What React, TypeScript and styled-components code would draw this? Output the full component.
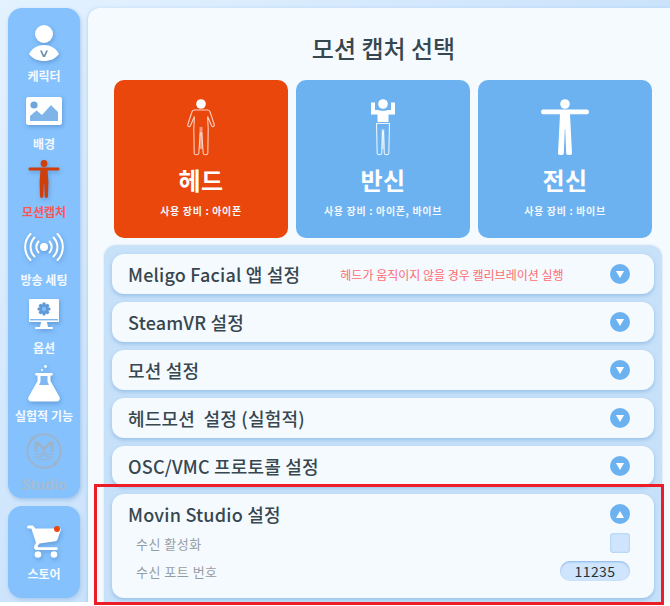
import React from "react";
import styled, { createGlobalStyle } from "styled-components";

const KR = `"Noto Sans CJK KR", "Noto Sans", sans-serif`;

const Global = createGlobalStyle`
  html, body { margin: 0; padding: 0; background: #fff; }
  body { font-family: ${KR}; overflow: hidden; }
`;

const Screen = styled.div`
  position: relative;
  width: 670px;
  height: 606px;
  overflow: hidden;
`;

const Page = styled.div`
  width: 670px;
  height: 602px;
  overflow: hidden;
  display: flex;
  gap: 8px;
  padding: 8px 0 0 8px;
  box-sizing: border-box;
  background: linear-gradient(135deg, #e4f2ff 0%, #c9e2fb 55%, #bcd9f6 100%);
`;

const Rail = styled.div`
  width: 72px;
  flex: none;
  display: flex;
  flex-direction: column;
  gap: 8px;
`;

const Group = styled.nav`
  height: 490px;
  padding-top: 10px;
  box-sizing: border-box;
  background: #84c1fd;
  border-radius: 14px;
  box-shadow: 1px 2px 4px rgba(70, 130, 200, 0.35);
`;

const StoreBox = styled.div`
  height: 92px;
  padding-top: 10px;
  box-sizing: border-box;
  background: #84c1fd;
  border-radius: 14px;
  box-shadow: 1px 2px 4px rgba(70, 130, 200, 0.25);
`;

const NavItem = styled.div`
  height: 68px;
  display: flex;
  flex-direction: column;
  align-items: center;
`;

const IconSlot = styled.div<{ $dim?: boolean }>`
  height: 50px;
  width: 100%;
  flex: none;
  display: flex;
  align-items: center;
  justify-content: center;
  svg { filter: ${(p) => (p.$dim ? "none" : "drop-shadow(1px 2px 2px rgba(40, 90, 150, 0.35))")}; overflow: visible; }
`;

const NavLabel = styled.div<{ $tone?: "white" | "red" | "dim" }>`
  height: 16px;
  line-height: 16px;
  font-size: ${(p) => (p.$tone === "dim" ? "14px" : "12px")};
  font-weight: 700;
  white-space: nowrap;
  color: ${(p) => (p.$tone === "red" ? "#ff5555" : p.$tone === "dim" ? "#a5bbd2" : "#f4faff")};
`;

const Main = styled.main`
  flex: 1;
  min-width: 0;
  height: 610px;
  background: #f5faff;
  border-radius: 12px 0 0 0;
  padding: 0 8px 0 16px;
  box-sizing: border-box;
  box-shadow: -1px 0 3px rgba(90, 150, 215, 0.25);
`;

const Title = styled.h1`
  margin: 0 -17px 0 -16px;
  height: 72px;
  line-height: 80px;
  text-align: center;
  font-size: 24px;
  font-weight: 500;
  color: #37474f;
`;

const Cards = styled.div`
  display: flex;
  gap: 8px;
  margin-left: 10px;
`;

const Card = styled.div<{ $active?: boolean }>`
  width: 174px;
  height: 158px;
  border-radius: 10px;
  background: ${(p) => (p.$active ? "#ea470d" : "#6cb2f0")};
  display: flex;
  flex-direction: column;
  align-items: center;
  color: #fff;
`;

const CardFigure = styled.div`
  height: 62px;
  margin-top: 19px;
  display: flex;
  align-items: flex-start;
  justify-content: center;
`;

const CardTitle = styled.div`
  font-size: 24px;
  font-weight: 700;
  line-height: 32px;
  margin-top: 3px;
  letter-spacing: 0.5px;
`;

const CardSub = styled.div`
  font-size: 10px;
  font-weight: 700;
  line-height: 14px;
  margin-top: 8px;
  letter-spacing: 0.65px;
  color: #f3f8ff;
`;

const Panel = styled.section`
  margin-top: 8px;
  height: 360px;
  padding: 8px 8px 0;
  box-sizing: border-box;
  background: #c7e1f9;
  border-radius: 12px 12px 0 0;
  display: flex;
  flex-direction: column;
  gap: 8px;
  box-shadow: 0 -1px 2px rgba(110, 160, 215, 0.35);
`;

const Row = styled.div<{ $open?: boolean }>`
  height: ${(p) => (p.$open ? "104px" : "40px")};
  flex: none;
  box-sizing: border-box;
  background: #f5faff;
  border-radius: 12px;
  padding: 0 24px 0 16px;
  box-shadow: 0 2px 4px rgba(80, 140, 210, 0.4);
`;

const RowHead = styled.div`
  height: 40px;
  display: flex;
  align-items: center;
`;

const RowTitle = styled.div`
  font-size: 18px;
  font-weight: 500;
  color: #37474f;
  white-space: pre;
  letter-spacing: 0.2px;
`;

const Hint = styled.div`
  font-size: 12px;
  color: #ff6a72;
  white-space: nowrap;
  margin-left: 40px;
`;

const Toggle = styled.div`
  margin-left: auto;
  width: 20px;
  height: 20px;
  border-radius: 50%;
  background: #6cb2f0;
  display: flex;
  align-items: center;
  justify-content: center;
`;

const Setting = styled.div`
  display: flex;
  align-items: center;
  height: 28px;
  padding-left: 8px;
  margin-top: -5px;
  & + & { margin-top: 0; }
`;

const SettingLabel = styled.div`
  font-size: 13px;
  color: #959da4;
  letter-spacing: 0.5px;
`;

const Check = styled.div`
  margin-left: auto;
  width: 20px;
  height: 20px;
  border-radius: 4px;
  background: #cfe5fd;
  box-shadow: inset 0 0 2px rgba(90, 150, 220, 0.6);
`;

const PortInput = styled.div`
  margin-left: auto;
  width: 70px;
  height: 20px;
  line-height: 20px;
  text-align: center;
  border-radius: 10px;
  background: #cfe5fd;
  box-shadow: inset 0 1px 2px rgba(90, 150, 220, 0.6);
  font-size: 14px;
  color: #263238;
  letter-spacing: 0.4px;
`;

const Marker = styled.div`
  position: absolute;
  left: 94px;
  top: 484px;
  width: 570px;
  height: 121px;
  box-sizing: border-box;
  border: 3.5px solid #ee1c25;
  pointer-events: none;
`;

const Tip = styled.span`
  position: absolute;
  right: 1px;
  top: 1px;
  width: 6px;
  height: 6px;
  border-radius: 50%;
  background: #ea470d;
`;

const CartWrap = styled.div`
  position: relative;
  display: flex;
`;

const PersonIcon = () => (
  <svg width="32" height="36" viewBox="0 0 32 36" fill="#fff">
    <circle cx="16" cy="9" r="9" />
    <path d="M1 29C4 23 10 20 16 20S28 23 31 29C27 34 22 36 16 36S5 34 1 29Z" />
    <path d="M12 25.5h1.8l2.2 4.8 2.2-4.8H20l-3 6.5h-2z" fill="#6f8da8" />
  </svg>
);

const ImageIcon = () => (
  <svg width="36" height="28" viewBox="0 0 36 28">
    <rect width="36" height="28" rx="2.5" fill="#fff" />
    <circle cx="8" cy="8" r="3.6" fill="#6ea6dc" />
    <path d="M4 23V19L10.5 13.5L16 18L25 8L32 15V24H4Z" fill="#7fb4e8" />
  </svg>
);

const TPoseIcon = () => (
  <svg width="32" height="38" viewBox="0 0 32 38" fill="#cf3f0c">
    <circle cx="16" cy="3.5" r="3.4" />
    <path d="M1.5 7.5H30.5C31.8 7.5 31.8 10.4 30.5 10.4H19.6L20.4 22L20 36.5C19.8 38.4 16.9 38.4 16.7 36.5L16.2 24H15.8L15.3 36.5C15.1 38.4 12.2 38.4 12 36.5L11.6 22L12.4 10.4H1.5C.2 10.4 .2 7.5 1.5 7.5Z" />
  </svg>
);

const BroadcastIcon = () => (
  <svg width="36" height="28" viewBox="0 0 36 28" fill="none" stroke="#fff" strokeWidth="2" strokeLinecap="round">
    <circle cx="18" cy="14" r="4" fill="#fff" stroke="none" />
    <path d="M12.5 8.5a8 8 0 0 0 0 11M23.5 8.5a8 8 0 0 1 0 11" />
    <path d="M8.5 4.5a13.5 13.5 0 0 0 0 19M27.5 4.5a13.5 13.5 0 0 1 0 19" />
    <path d="M4.5 1a18.5 18.5 0 0 0 0 26M31.5 1a18.5 18.5 0 0 1 0 26" />
  </svg>
);

const gearTeeth = [0, 45, 90, 135];
const MonitorIcon = () => (
  <svg width="30" height="32" viewBox="0 0 30 32">
    <rect width="30" height="23" rx="1" fill="#fff" />
    <rect x="1" y="20" width="28" height="1.4" fill="#7eb6ee" />
    <path d="M12 23H18L19 28H11Z" fill="#fff" />
    <rect x="6" y="28" width="18" height="2" rx="1" fill="#fff" />
    <g fill="#5f9ad6">
      {gearTeeth.map((a) => (
        <rect key={a} x="13.4" y="3.6" width="3.2" height="12.8" rx="0.8" transform={`rotate(${a} 15 10)`} />
      ))}
      <circle cx="15" cy="10" r="4.8" />
    </g>
    <circle cx="15" cy="10" r="2.2" fill="#84bdf3" />
  </svg>
);

const FlaskIcon = () => (
  <svg width="32" height="37" viewBox="0 0 32 37">
    <circle cx="17.5" cy="1.5" r="1.4" fill="#fff" />
    <circle cx="14" cy="5" r="1" fill="#fff" />
    <path d="M8 8H24C25 8 25 10.5 24 10.5H22.5V16L31.5 32C32.5 34.5 31 36.5 29 36.5H3C1 36.5-.5 34.5.5 32L9.5 16V10.5H8C7 10.5 7 8 8 8Z" fill="#fff" />
    <path d="M12.5 11H19.5V16.5L21 20H11L12.5 16.5Z" fill="#7fb8f2" />
  </svg>
);

const StudioIcon = () => (
  <svg width="36" height="36" viewBox="0 0 36 36" fill="none" stroke="#a0b2c6">
    <circle cx="18" cy="18" r="16.8" strokeWidth="1.8" />
    <path d="M10 19V9.5H11.5L18 16L24.5 9.5H26V19" strokeWidth="2.6" strokeLinejoin="round" />
    <path d="M9 21.5H14L18 18M27 21.5H22L18 18" strokeWidth="1.1" />
    <path d="M9 24H14.5L18 21L21.5 24H27" strokeWidth="1.1" />
    <path d="M11 26.5H25" strokeWidth="1" />
    <circle cx="6.5" cy="5.5" r="2" fill="#a0b2c6" stroke="none" />
    <circle cx="29.5" cy="30.5" r="2" fill="#a0b2c6" stroke="none" />
  </svg>
);

const CartIcon = () => (
  <svg width="34" height="33" viewBox="0 0 34 33" fill="#fff">
    <path d="M1.5 0.5H5C6 0.5 6.8 1 7.2 2L8.3 3.5H33C33.8 3.5 34 4.3 33.8 5L30.5 14.5C30.2 15.3 29.5 16 28.5 16.2L12.5 18.6L10.8 20.8C10.4 21.6 10.9 22.2 11.6 22.2H30.5V25H10C7.5 25 6.2 22.5 7.6 20.2L9 17.8L4.3 3.5H1.5C-.4 3.5-.4 .5 1.5 .5Z" />
    <circle cx="11" cy="29.5" r="3.3" />
    <circle cx="27" cy="29.5" r="3.3" />
  </svg>
);

const HeadFigure = () => (
  <svg width="30" height="57" viewBox="0 0 30 57" fill="none" stroke="#fff" strokeOpacity="0.75" strokeWidth="1.1">
    <circle cx="15" cy="5" r="4.8" fill="#fff" stroke="none" />
    <path d="M8.5 11H21.5C22.8 11 23.6 11.8 24 12.8L28.2 25.5C28.8 27.6 26.6 28.4 25.6 26.7L21.6 17.5L22.2 30L21.8 54.5C21.6 56.2 17.5 56.2 17.2 54.5L15.8 34H14.2L12.8 54.5C12.5 56.2 8.4 56.2 8.2 54.5L7.8 30L8.4 17.5L4.4 26.7C3.4 28.4 1.2 27.6 1.8 25.5L6 12.8C6.4 11.8 7.2 11 8.5 11Z" />
    <path d="M15 28V50" strokeWidth="3" strokeOpacity="0.45" />
  </svg>
);

const HalfFigure = () => (
  <svg width="26" height="57" viewBox="0 0 26 57" fill="none">
    <circle cx="13" cy="5" r="4.8" fill="#fff" />
    <path d="M1 3.5H5V11H8C9 12 17 12 18 11H21V3.5H25V15.5H18.5V23H7.5V15.5H1Z" fill="#fff" />
    <path d="M6.5 24.5L7.2 54.5C7.4 56 11.5 56 11.7 54.5L12.6 32H13.4L14.3 54.5C14.5 56 18.6 56 18.8 54.5L19.5 24.5Z" stroke="#fff" strokeOpacity="0.85" strokeWidth="1.1" />
    <path d="M13 30V50" stroke="#fff" strokeOpacity="0.4" strokeWidth="3" />
  </svg>
);

const FullFigure = () => (
  <svg width="48" height="57" viewBox="0 0 48 57" fill="#fff">
    <circle cx="24" cy="5" r="4.8" />
    <path d="M2 10.6H46C48.6 10.6 48.6 15.2 46 15.2H29L31 54.5C30.8 56.6 25.4 56.6 25.2 54.5L24.2 30H23.8L22.8 54.5C22.6 56.6 17.2 56.6 17 54.5L19 15.2H2C-.6 15.2-.6 10.6 2 10.6Z" />
  </svg>
);

const Down = () => (
  <svg width="8" height="7" viewBox="0 0 8 7" fill="#fff"><path d="M0 0H8L4 7Z" /></svg>
);
const Up = () => (
  <svg width="8" height="7" viewBox="0 0 8 7" fill="#fff"><path d="M0 7H8L4 0Z" /></svg>
);

const nav = [
  { label: "케릭터", icon: <PersonIcon /> },
  { label: "배경", icon: <ImageIcon /> },
  { label: "모션캡처", icon: <TPoseIcon />, tone: "red" as const },
  { label: "방송 세팅", icon: <BroadcastIcon /> },
  { label: "옵션", icon: <MonitorIcon /> },
  { label: "실험적 기능", icon: <FlaskIcon /> },
  { label: "Studio", icon: <StudioIcon />, tone: "dim" as const, dim: true },
];

const cards = [
  { title: "헤드", sub: "사용 장비 : 아이폰", fig: <HeadFigure />, active: true },
  { title: "반신", sub: "사용 장비 : 아이폰, 바이브", fig: <HalfFigure /> },
  { title: "전신", sub: "사용 장비 : 바이브", fig: <FullFigure /> },
];

const rows = ["SteamVR 설정", "모션 설정", "헤드모션  설정 (실험적)", "OSC/VMC 프로토콜 설정"];

export default function App() {
  return (
    <Screen>
      <Global />
      <Page>
        <Rail>
          <Group>
            {nav.map((n) => (
              <NavItem key={n.label}>
                <IconSlot $dim={n.dim}>{n.icon}</IconSlot>
                <NavLabel $tone={n.tone}>{n.label}</NavLabel>
              </NavItem>
            ))}
          </Group>
          <StoreBox>
            <NavItem>
              <IconSlot>
                <CartWrap>
                  <CartIcon />
                  <Tip />
                </CartWrap>
              </IconSlot>
              <NavLabel>스토어</NavLabel>
            </NavItem>
          </StoreBox>
        </Rail>
        <Main>
          <Title>모션 캡처 선택</Title>
          <Cards>
            {cards.map((c) => (
              <Card key={c.title} $active={c.active}>
                <CardFigure>{c.fig}</CardFigure>
                <CardTitle>{c.title}</CardTitle>
                <CardSub>{c.sub}</CardSub>
              </Card>
            ))}
          </Cards>
          <Panel>
            <Row>
              <RowHead>
                <RowTitle>Meligo Facial 앱 설정</RowTitle>
                <Hint>헤드가 움직이지 않을 경우 캘리브레이션 실행</Hint>
                <Toggle><Down /></Toggle>
              </RowHead>
            </Row>
            {rows.map((r) => (
              <Row key={r}>
                <RowHead>
                  <RowTitle>{r}</RowTitle>
                  <Toggle><Down /></Toggle>
                </RowHead>
              </Row>
            ))}
            <Row $open>
              <RowHead>
                <RowTitle>Movin Studio 설정</RowTitle>
                <Toggle><Up /></Toggle>
              </RowHead>
              <Setting>
                <SettingLabel>수신 활성화</SettingLabel>
                <Check />
              </Setting>
              <Setting>
                <SettingLabel>수신 포트 번호</SettingLabel>
                <PortInput>11235</PortInput>
              </Setting>
            </Row>
          </Panel>
        </Main>
      </Page>
      <Marker />
    </Screen>
  );
}
